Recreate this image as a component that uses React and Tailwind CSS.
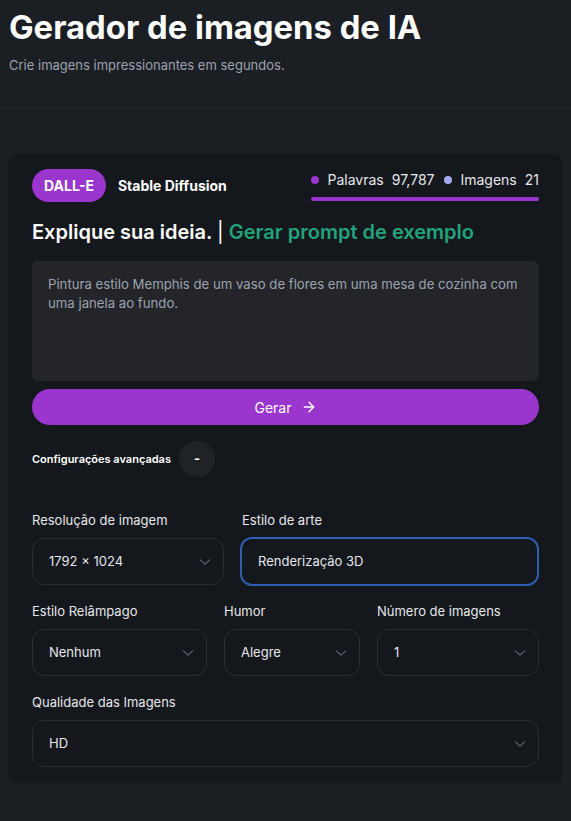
import React from "react";

const Chevron = () => (
  <svg width="20" height="20" viewBox="0 0 24 24" fill="none" stroke="#5f6571" strokeWidth="1.4" strokeLinecap="round" strokeLinejoin="round">
    <path d="m6.5 9.5 5.5 5 5.5-5" />
  </svg>
);

const Select = ({ value }) => (
  <div className="h-[47px] rounded-xl border border-[#2a2d33] bg-[#14171c] flex items-center justify-between pl-4 pr-2 text-[13px] text-[#e5e7eb]">
    <span>{value}</span>
    <Chevron />
  </div>
);

const Label = ({ children }) => (
  <div className="text-[13px] text-[#e5e7eb] mb-2 leading-5">{children}</div>
);

export default function App() {
  return (
    <div className="min-h-[821px] bg-[#1b1e23] text-white" style={{ fontFamily: "Inter, 'Noto Sans', sans-serif" }}>
      <div className="px-[9px] pt-[7px] h-[109px] border-b border-[#262a30]">
        <h1 className="text-[32.8px] leading-10 font-bold">Gerador de imagens de IA</h1>
        <p className="text-[13px] leading-5 text-[#9ca3af] mt-2">Crie imagens impressionantes em segundos.</p>
      </div>
      <div className="px-2 pt-[45px] pb-10">
        <div className="bg-[#14171c] rounded-[10px] px-6 pt-[15px] pb-[16px]">
          <div className="flex items-start justify-between">
            <div className="flex items-center gap-3">
              <div className="h-[33px] px-3 rounded-full bg-[#9a35cd] flex items-center text-[14px] font-bold">DALL-E</div>
              <div className="text-[14px] font-bold">Stable Diffusion</div>
            </div>
            <div className="pt-[1px]">
              <div className="flex items-center text-[14px] text-[#e5e7eb] leading-5">
                <span className="w-2 h-2 rounded-full bg-[#9a35cd] mr-2"></span>
                <span>Palavras</span>
                <span className="ml-2">97,787</span>
                <span className="w-2 h-2 rounded-full bg-[#a5a8f0] ml-[10px] mr-2"></span>
                <span>Imagens</span>
                <span className="ml-2">21</span>
              </div>
              <div className="h-1 rounded-full bg-[#9a35cd] mt-[7px]"></div>
            </div>
          </div>
          <div className="mt-[16px] text-[20px] font-semibold leading-7">
            Explique sua ideia. <span className="font-normal">|</span> <span className="text-[#22a37b]">Gerar prompt de exemplo</span>
          </div>
          <div className="mt-[15px] h-[120px] rounded-md bg-[#232529] pl-4 pr-3 pt-[14px] text-[13.2px] leading-[19px] text-[#9ca3af]">
            Pintura estilo Memphis de um vaso de flores em uma mesa de cozinha com uma janela ao fundo.
          </div>
          <button className="mt-2 w-full h-9 rounded-full bg-[#9a35cd] flex items-center justify-center gap-[9px] text-[14px] text-white">
            <span>Gerar</span>
            <svg width="16" height="16" viewBox="0 0 24 24" fill="none" stroke="white" strokeWidth="2.2" strokeLinecap="round" strokeLinejoin="round">
              <path d="M5 12h14" />
              <path d="m12 5 7 7-7 7" />
            </svg>
          </button>
          <div className="mt-4 flex items-center gap-2">
            <span className="text-[11px] font-semibold">Configurações avançadas</span>
            <div className="w-9 h-9 rounded-full bg-[#1f2227] flex items-center justify-center text-[13px] font-bold">-</div>
          </div>
          <div className="mt-[33px] grid grid-cols-[192px_1fr] gap-4 items-start">
            <div>
              <Label>Resolução de imagem</Label>
              <Select value="1792 × 1024" />
            </div>
            <div>
              <Label><span className="pl-[2px]">Estilo de arte</span></Label>
              <div className="h-[49px] -mt-[1px] rounded-xl border-2 border-[#2f5fb0] flex items-center px-4 text-[13px] text-[#e5e7eb]">
                Renderização 3D
              </div>
            </div>
          </div>
          <div className="mt-[15px] grid grid-cols-[175px_136px_162px] gap-[17px]">
            <div>
              <Label>Estilo Relâmpago</Label>
              <Select value="Nenhum" />
            </div>
            <div>
              <Label>Humor</Label>
              <Select value="Alegre" />
            </div>
            <div>
              <Label>Número de imagens</Label>
              <Select value="1" />
            </div>
          </div>
          <div className="mt-4">
            <Label>Qualidade das Imagens</Label>
            <Select value="HD" />
          </div>
        </div>
      </div>
    </div>
  );
}
